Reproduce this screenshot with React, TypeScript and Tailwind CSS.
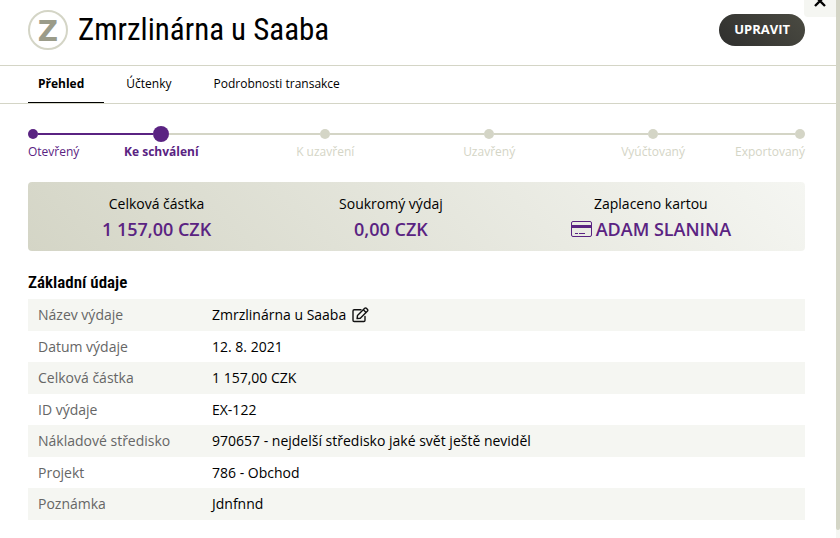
import React from 'react'
import { clsx } from 'clsx'

interface Step {
    label: string
    state: 'done' | 'active' | 'todo'
    lineBefore: boolean
    lineAfter: boolean
}

interface DetailRow {
    label: string
    value: string
    editable?: boolean
}

const tabs = ['Přehled', 'Účtenky', 'Podrobnosti transakce']

const steps: Step[] = [
    { label: 'Otevřený', state: 'done', lineBefore: false, lineAfter: true },
    { label: 'Ke schválení', state: 'active', lineBefore: true, lineAfter: false },
    { label: 'K uzavření', state: 'todo', lineBefore: false, lineAfter: false },
    { label: 'Uzavřený', state: 'todo', lineBefore: false, lineAfter: false },
    { label: 'Vyúčtovaný', state: 'todo', lineBefore: false, lineAfter: false },
    { label: 'Exportovaný', state: 'todo', lineBefore: false, lineAfter: false },
]

const details: DetailRow[] = [
    { label: 'Název výdaje', value: 'Zmrzlinárna u Saaba', editable: true },
    { label: 'Datum výdaje', value: '12. 8. 2021' },
    { label: 'Celková částka', value: '1 157,00 CZK' },
    { label: 'ID výdaje', value: 'EX-122' },
    { label: 'Nákladové středisko', value: '970657 - nejdelší středisko jaké svět ještě neviděl' },
    { label: 'Projekt', value: '786 - Obchod' },
    { label: 'Poznámka', value: 'Jdnfnnd' },
]

const CardIcon = () => (
    <svg className="w-[21px] h-4" viewBox="0 0 21 16" fill="none" aria-hidden="true">
        <rect x="0.5" y="0.5" width="20" height="15" rx="1.5" stroke="#5a2382" />
        <path d="M1 4h19v3H1z" fill="#5a2382" />
        <path d="M4 12.5h3M8 12.5h6" stroke="#5a2382" />
    </svg>
)

const EditIcon = () => (
    <svg className="w-[17px] h-4" viewBox="0 0 17 16" fill="none" stroke="#111" strokeWidth="1.4" strokeLinejoin="round" strokeLinecap="round" aria-hidden="true">
        <path d="M9 2.7H2.2A1.2 1.2 0 0 0 1 3.9v9.4a1.2 1.2 0 0 0 1.2 1.2h9.6a1.2 1.2 0 0 0 1.2-1.2V9.5" />
        <path d="M5.5 8.4 12.7 1.3a1.2 1.2 0 0 1 1.7 0l1.1 1.1a1.2 1.2 0 0 1 0 1.7L8.3 11.2l-3.2.4zM11.3 2.7l2.8 2.8" />
    </svg>
)

const Header = () => (
    <header className="flex items-center h-[66px] pl-7 pr-[31px] pb-[6px] border-b border-[#d4d5c6]">
        <div className="flex items-center justify-center w-10 h-10 pt-1 rounded-full border-2 border-[#d4d5c6] font-['DejaVu_Sans',sans-serif] text-[28px] leading-7 font-bold text-[#9b9c89]">
            Z
        </div>
        <h1 className="ml-[10px] flex-1 font-['Roboto_Condensed','Roboto',sans-serif] text-[31px] leading-10">
            Zmrzlinárna u Saaba
        </h1>
        <button
            type="button"
            className="h-8 px-[15px] rounded-full bg-linear-45 from-[#2f2f2e] to-[#4b4b42] text-[13px] font-bold text-white"
        >
            UPRAVIT
        </button>
    </header>
)

const Tabs = () => (
    <nav className="flex gap-3 h-[38px] pl-7 border-b border-[#d4d5c6] text-xs">
        {tabs.map((tab, index) => (
            <a
                key={tab}
                href="#"
                className={clsx(
                    'flex items-center pl-[10px] pr-5 border-b',
                    index === 0 ? 'border-black font-bold' : 'border-transparent'
                )}
            >
                {tab}
            </a>
        ))}
    </nav>
)

const Progress = () => (
    <ol className="flex mt-[22px] text-xs">
        {steps.map((step, index) => {
            const first = index === 0
            const last = index === steps.length - 1
            return (
                <li key={step.label} className={clsx('flex flex-col', !first && !last && 'flex-1')}>
                    <div className="flex items-center h-4">
                        {!first && (
                            <span className={clsx('flex-1 h-[2px]', step.lineBefore ? 'bg-[#5a2382]' : 'bg-[#d4d5c6]')} />
                        )}
                        <span
                            className={clsx(
                                'rounded-full',
                                step.state === 'active' ? 'w-4 h-4' : 'w-[10px] h-[10px]',
                                step.state === 'todo' ? 'bg-[#d4d5c6]' : 'bg-[#5a2382]'
                            )}
                        />
                        {!last && (
                            <span className={clsx('flex-1 h-[2px]', step.lineAfter ? 'bg-[#5a2382]' : 'bg-[#d4d5c6]')} />
                        )}
                    </div>
                    <span
                        className={clsx(
                            'mt-[2px] text-center leading-4',
                            step.state === 'todo' ? 'text-[#d4d5c6]' : 'text-[#5a2382]',
                            step.state === 'active' && 'font-bold'
                        )}
                    >
                        {step.label}
                    </span>
                </li>
            )
        })}
    </ol>
)

const Summary = () => (
    <dl className="flex justify-around mt-[22px] h-[69px] px-[10px] py-3 rounded bg-linear-45 from-[#d4d5c6] to-[#f5f6f2] text-center">
        <div>
            <dt className="text-sm leading-5">Celková částka</dt>
            <dd className="mt-[2px] text-lg leading-[26px] font-semibold text-[#5a2382]">1 157,00 CZK</dd>
        </div>
        <div>
            <dt className="text-sm leading-5">Soukromý výdaj</dt>
            <dd className="mt-[2px] text-lg leading-[26px] font-semibold text-[#5a2382]">0,00 CZK</dd>
        </div>
        <div>
            <dt className="text-sm leading-5">Zaplaceno kartou</dt>
            <dd className="flex items-center gap-1 mt-[2px] text-lg leading-[26px] font-semibold text-[#5a2382]">
                <CardIcon />
                ADAM SLANINA
            </dd>
        </div>
    </dl>
)

const Details = () => (
    <section className="mt-[18px]">
        <h2 className="font-['Roboto_Condensed','Roboto',sans-serif] text-[17px] leading-[26px] font-semibold">
            Základní údaje
        </h2>
        <table className="w-full mt-1 text-sm leading-5">
            <tbody>
                {details.map((row) => (
                    <tr key={row.label} className="odd:h-8 even:h-[31px] odd:bg-[#f5f6f2]">
                        <th scope="row" className="w-[174px] pl-[10px] text-left font-normal text-[#666]">
                            {row.label}
                        </th>
                        <td className="pl-[10px]">
                            <span className="flex items-center gap-[6px]">
                                {row.value}
                                {row.editable && (
                                    <button type="button" aria-label="Upravit název">
                                        <EditIcon />
                                    </button>
                                )}
                            </span>
                        </td>
                    </tr>
                ))}
            </tbody>
        </table>
    </section>
)

const App = () => {
    return (
        <div className="relative flex min-h-screen overflow-hidden bg-white font-['Open_Sans',sans-serif] text-black">
            <main className="flex-1">
                <Header />
                <Tabs />
                <div className="pl-7 pr-[31px]">
                    <Progress />
                    <Summary />
                    <Details />
                </div>
            </main>

            <div className="flex flex-col w-1 bg-[#f5f6f2]">
                <div className="flex-1 mb-2 rounded-b-full bg-[#d4d5c6]" />
            </div>

            <button
                type="button"
                aria-label="Zavřít"
                className="absolute -top-[15px] right-1 flex items-center justify-center w-8 h-8 rounded-bl bg-[#f5f6f2]"
            >
                <svg className="w-3 h-3" viewBox="0 0 12 12" stroke="#000" strokeWidth="2.4" aria-hidden="true">
                    <path d="M1 1l10 10M11 1L1 11" />
                </svg>
            </button>
        </div>
    )
}

export default App
